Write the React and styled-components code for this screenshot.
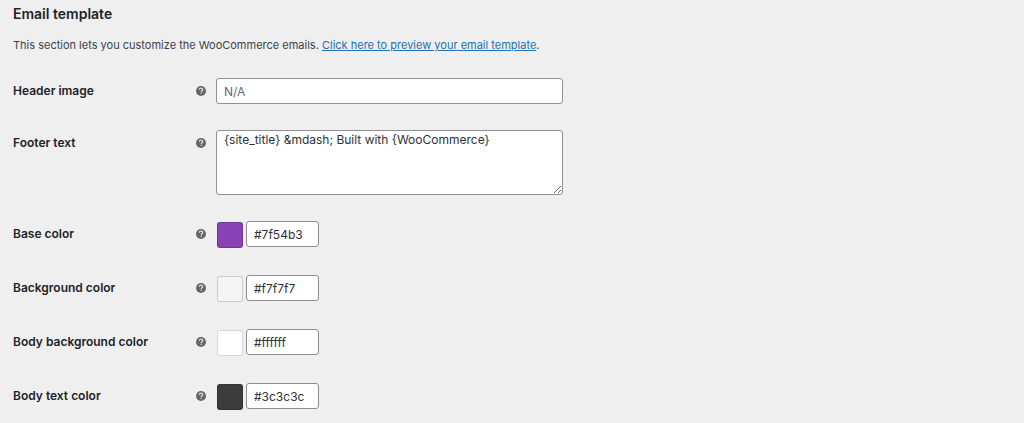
import React from "react";
import styled, { createGlobalStyle, css } from "styled-components";

const GlobalStyle = createGlobalStyle`
  *, *::before, *::after { box-sizing: border-box; }
  body {
    margin: 0;
    background: #efefef;
    color: #3c434a;
    font-family: Inter, "Liberation Sans", sans-serif;
    font-size: 11px;
    line-height: 16px;
  }
`;

const Page = styled.main`
  padding: 4px 13px 12px;
`;

const Title = styled.h2`
  margin: 0;
  color: #1d2327;
  font-size: 14px;
  font-weight: 600;
  line-height: 20px;
`;

const Description = styled.p`
  margin: 13px 0 25px;
`;

const PreviewLink = styled.a`
  color: #2271b1;
  text-decoration: underline;
`;

const Form = styled.form`
  display: flex;
  flex-direction: column;
  gap: 26px;
`;

const Row = styled.div`
  display: grid;
  grid-template-columns: 193px minmax(0, 347px);
  column-gap: 10px;
  align-items: start;
`;

const Heading = styled.div`
  display: flex;
  align-items: center;
  justify-content: space-between;
  height: 25px;
`;

const Label = styled.label`
  color: #1d2327;
  font-size: 12px;
  font-weight: 600;
  line-height: 16px;
`;

const HelpIcon = styled.svg`
  display: block;
  width: 10px;
  height: 10px;
`;

const fieldStyles = css`
  display: block;
  margin: 0;
  border: 1px solid #8c8f94;
  border-radius: 3px;
  background: #fff;
  color: #2c3338;
  font-family: inherit;
  font-size: 12px;
  line-height: 16px;
  outline-color: #2271b1;
`;

const TextInput = styled.input`
  ${fieldStyles}
  width: ${({ $compact }) => ($compact ? "73px" : "100%")};
  height: 26px;
  padding: 0 7px;
  &::placeholder { color: #646970; opacity: 1; }
`;

const TextArea = styled.textarea`
  ${fieldStyles}
  width: 100%;
  height: 65px;
  padding: 1px 7px;
  resize: both;
`;

const ColorPair = styled.div`
  display: flex;
  align-items: flex-start;
  gap: 3px;
  padding-left: 1px;
`;

const Swatch = styled.span`
  width: 26px;
  height: 26px;
  margin: 1px 0;
  border: 1px solid rgba(0, 0, 0, 0.16);
  border-radius: 3px;
  background: ${({ $color }) => $color};
`;

function HelpTip() {
  return (
    <HelpIcon viewBox="0 0 20 20" role="img" aria-label="Help">
      <circle cx="10" cy="10" r="10" fill="#666" />
      <path
        d="M6.600 7.600C6.700 5.400 8.100 4.300 10.100 4.300c2 0 3.400 1.100 3.400 2.900 0 2.400-3 2.500-3 4.700"
        fill="none"
        stroke="#dcdcdc"
        strokeWidth="2.600"
      />
      <circle cx="10.400" cy="14.700" r="1.500" fill="#dcdcdc" />
    </HelpIcon>
  );
}

function Field({ id, label, children }) {
  return (
    <Row>
      <Heading>
        <Label htmlFor={id}>{label}</Label>
        <HelpTip />
      </Heading>
      {children}
    </Row>
  );
}

const colors = [
  { id: "base-color", label: "Base color", value: "#7f54b3", preview: "#8a41b5" },
  { id: "background-color", label: "Background color", value: "#f7f7f7", preview: "#f5f5f5" },
  { id: "body-background-color", label: "Body background color", value: "#ffffff", preview: "#ffffff" },
  { id: "body-text-color", label: "Body text color", value: "#3c3c3c", preview: "#3c3c3c" },
];

export default function App() {
  return (
    <>
      <GlobalStyle />
      <Page>
        <Title>Email template</Title>
        <Description>
          This section lets you customize the WooCommerce emails.{" "}
          <PreviewLink href="#preview">Click here to preview your email template</PreviewLink>.
        </Description>
        <Form>
          <Field id="header-image" label="Header image">
            <TextInput id="header-image" type="text" placeholder="N/A" />
          </Field>
          <Field id="footer-text" label="Footer text">
            <TextArea
              id="footer-text"
              defaultValue={"{site_title} &mdash; Built with {WooCommerce}"}
            />
          </Field>
          {colors.map(({ id, label, value, preview }) => (
            <Field key={id} id={id} label={label}>
              <ColorPair>
                <Swatch $color={preview} />
                <TextInput $compact id={id} type="text" defaultValue={value} />
              </ColorPair>
            </Field>
          ))}
        </Form>
      </Page>
    </>
  );
}
